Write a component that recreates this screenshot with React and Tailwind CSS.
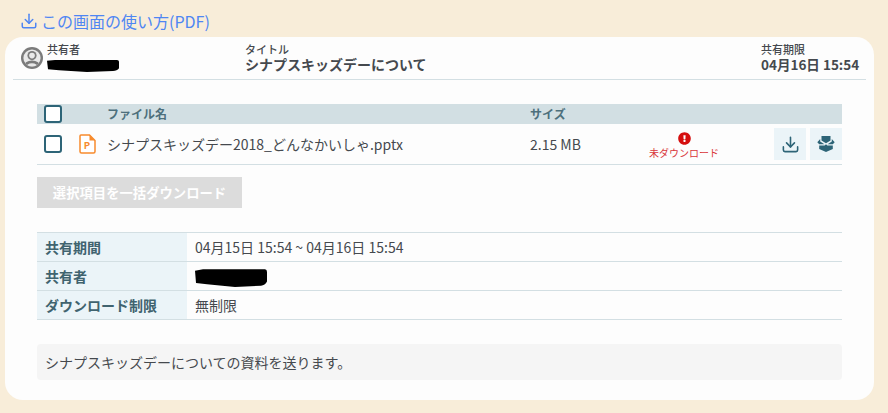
import React from 'react';
import { Download } from 'lucide-react';
import { FaExclamationCircle } from 'react-icons/fa';

const font = 'font-["Noto_Sans_CJK_JP","Noto_Sans",sans-serif]';

const Scribble = ({ className }) => (
  <svg className={className} viewBox="0 0 72 14" preserveAspectRatio="none">
    <path d="M0 2 L8 1 L70 1 Q72 1 72 3 L72 10 Q70 13 66 13 L40 14 L12 12 L1 11 Z" fill="#000" />
  </svg>
);

const FileIcon = () => (
  <svg width="17" height="20" viewBox="0 0 17 20" fill="none">
    <path d="M2 1 H10.5 L16 6.5 V17.5 Q16 19 14.5 19 H2.5 Q1 19 1 17.5 V2 Q1 1 2 1 Z" stroke="#f78b2d" strokeWidth="1.5" fill="#fff" />
    <path d="M10.5 1 L16 6.5 H10.5 Z" fill="#f78b2d" />
    <text x="8" y="15" textAnchor="middle" fontSize="9.5" fontWeight="700" fill="#f78b2d">P</text>
  </svg>
);

const UserIcon = () => (
  <svg width="22" height="22" viewBox="0 0 22 22" className="mt-[4px] shrink-0">
    <defs>
      <clipPath id="disc"><circle cx="11" cy="11" r="8.6" /></clipPath>
    </defs>
    <circle cx="11" cy="11" r="11" fill="#7b7b7b" />
    <circle cx="11" cy="11" r="8.6" fill="#e9e9e9" />
    <g clipPath="url(#disc)">
      <circle cx="11" cy="8.6" r="4.6" fill="#7b7b7b" />
      <circle cx="11" cy="8.6" r="2.8" fill="#e9e9e9" />
      <ellipse cx="11" cy="19.5" rx="8.4" ry="6" fill="#7b7b7b" />
      <ellipse cx="11" cy="20.5" rx="6" ry="4.2" fill="#e9e9e9" />
    </g>
  </svg>
);

// open box, drawn by hand: the package icons are wider and flatter
const BoxIcon = () => (
  <svg width="18" height="16" viewBox="0 0 18 16" fill="#2d6477">
    <path d="M4.5 0 H13.5 V4.5 L9 7.2 L4.5 4.5 Z" />
    <path d="M3.2 3 L0.3 6.2 L2.2 8.2 L7.4 8.2 L3.2 5.6 Z" />
    <path d="M14.8 3 L17.7 6.2 L15.8 8.2 L10.6 8.2 L14.8 5.6 Z" />
    <path d="M2.2 9.4 H7.6 L9 8.2 L10.4 9.4 H15.8 V13 L9 16 L2.2 13 Z" />
  </svg>
);

const Checkbox = () => (
  <div className="w-[18px] h-[18px] rounded-[3px] border-2 border-[#2d6477] bg-white" />
);

const infoRows = [
  { label: '共有期間', value: '04月15日 15:54 ~ 04月16日 15:54' },
  { label: '共有者', redacted: true },
  { label: 'ダウンロード制限', value: '無制限' },
];

export default function App() {
  return (
    <div className={`${font} w-[888px] h-[413px] overflow-hidden bg-[#f8edd9] text-[#45494e] px-[5px] pt-[8px]`}>
      <a className="flex items-start h-[29px] pl-[15px] pt-[3px] gap-[3px] text-[16px] leading-[20px] text-[#4f86f3]">
        <Download size={18} strokeWidth={2} className="mt-[1px]" />
        この画面の使い方(PDF)
      </a>

      <div className="w-[869px] h-[363px] rounded-[18px] bg-[#fdfdfd] px-[8px]">
        <div className="flex h-[43px] border-b border-[#d3dfe3] pt-[6px]">
          <div className="flex w-[232px] pl-[8px]">
            <UserIcon />
            <div className="ml-[4px]">
              <div className="text-[11px] leading-[13px] font-medium">共有者</div>
              <Scribble className="w-[72px] h-[13px] mt-[3px]" />
            </div>
          </div>
          <div className="w-[516px]">
            <div className="text-[11px] leading-[13px] font-medium">タイトル</div>
            <div className="text-[14px] leading-[17px] font-bold whitespace-nowrap">シナプスキッズデーについて</div>
          </div>
          <div>
            <div className="text-[11px] leading-[13px] font-medium">共有期限</div>
            <div className="text-[13.5px] leading-[16px] font-bold whitespace-nowrap">04月16日 15:54</div>
          </div>
        </div>

        <div className="px-[24px] pt-[24px]">
          <div className="flex items-center h-[20px] bg-[#d2dfe3] text-[12px] font-bold text-[#4d6f7c]">
            <div className="w-[70px] pl-[7px]"><Checkbox /></div>
            <div className="w-[423px]">ファイル名</div>
            <div>サイズ</div>
          </div>
          <div className="flex items-center h-[41px] border-b border-[#d3dfe3] text-[14px]">
            <div className="w-[42px] pl-[7px]"><Checkbox /></div>
            <div className="w-[28px]"><FileIcon /></div>
            <div className="w-[423px] whitespace-nowrap">シナプスキッズデー2018_どんなかいしゃ.pptx</div>
            <div className="w-[119px]">2.15 MB</div>
            <div className="w-[70px] flex flex-col items-center text-[10px] leading-[12px] text-[#d9353a] pt-[3px]">
              <FaExclamationCircle size={13} color="#d50f0f" className="mb-[2px]" />
              <span className="whitespace-nowrap">未ダウンロード</span>
            </div>
            <div className="flex gap-[4px] ml-auto">
              <button className="w-[32px] h-[32px] flex items-center justify-center bg-[#ebf4f8] text-[#2d6477]">
                <Download size={19} strokeWidth={2} />
              </button>
              <button className="w-[32px] h-[32px] flex items-center justify-center bg-[#ebf4f8]">
                <BoxIcon />
              </button>
            </div>
          </div>

          <button className="mt-[12px] w-[205px] h-[31px] bg-[#dcdcdc] text-white text-[13.33px] font-bold">
            選択項目を一括ダウンロード
          </button>

          <div className="mt-[24px] border-t border-[#d3dfe3]">
            {infoRows.map((row) => (
              <div key={row.label} className="flex h-[29px] border-b border-[#d3dfe3] text-[14px]">
                <div className="w-[150px] pl-[8px] flex items-center bg-[#ebf4f8] font-bold text-[#40636f]">{row.label}</div>
                <div className="pl-[8px] flex items-center">
                  {row.redacted ? <Scribble className="w-[72px] h-[19px] mt-[3px]" /> : row.value}
                </div>
              </div>
            ))}
          </div>

          <div className="mt-[24px] h-[36px] flex items-center rounded-[4px] bg-[#f5f5f5] px-[8px] text-[14px]">
            シナプスキッズデーについての資料を送ります。
          </div>
        </div>
      </div>
    </div>
  );
}
